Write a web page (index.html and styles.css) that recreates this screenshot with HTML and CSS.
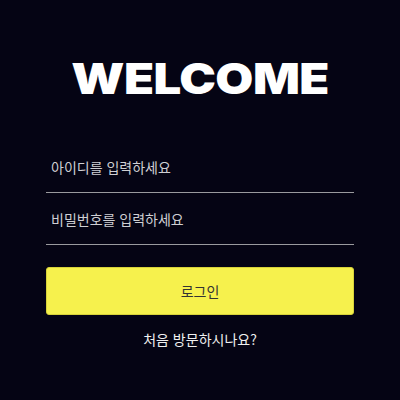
FILE: index.html
```html
<!DOCTYPE html>
<html lang="ko">
<head>
<meta charset="utf-8">
<link rel="stylesheet" href="styles.css">
</head>
<body>
<main class="login">
  <h1 class="title">WELCOME</h1>
  <form class="form">
    <label class="field"><input class="input" type="text" placeholder="아이디를 입력하세요"></label>
    <label class="field"><input class="input" type="password" placeholder="비밀번호를 입력하세요"></label>
    <button class="btn" type="button">로그인</button>
    <p class="signup">처음 방문하시나요?</p>
  </form>
</main>
</body>
</html>
```
FILE: styles.css
```css
html, body {
  margin: 0;
  padding: 0;
  background: #050414;
  width: 400px;
  height: 400px;
  overflow: hidden;
}
.login {
  display: flex;
  flex-direction: column;
  align-items: center;
  padding-top: 54px;
  font-family: "Noto Sans CJK KR", "Noto Sans", sans-serif;
}
.title {
  margin: 0;
  font-family: Inter, "Liberation Sans", sans-serif;
  font-weight: 900;
  font-size: 42px;
  line-height: 50px;
  letter-spacing: -0.5px;
  color: #ffffff;
  transform: scaleX(1.17);
}
.form {
  width: 308px;
  display: flex;
  flex-direction: column;
  margin-top: 42px;
}
.field {
  display: block;
  border-bottom: 1px solid #9a9a9e;
  height: 46px;
  margin-bottom: 5px;
}
.input {
  width: 100%;
  box-sizing: border-box;
  background: transparent;
  border: none;
  outline: none;
  padding: 11px 5px;
  font-family: "Noto Sans CJK KR", sans-serif;
  font-size: 14px;
  line-height: 20px;
  color: #ddd;
}
.input::placeholder {
  color: #cfcfd3;
}
.btn {
  margin-top: 17px;
  height: 48px;
  background: #f6f14d;
  border: 1px solid #d8d33a;
  border-radius: 3px;
  font-family: "Noto Sans CJK KR", sans-serif;
  font-size: 14px;
  color: #333;
}
.signup {
  margin: 14px 0 0;
  text-align: center;
  font-size: 14px;
  line-height: 20px;
  color: #f0f0f0;
}
```
